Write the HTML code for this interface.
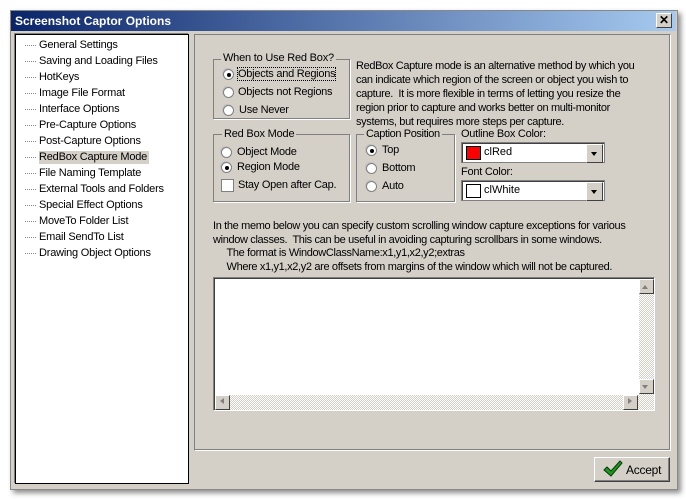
<!DOCTYPE html><html><head><style>
body{margin:0;width:686px;height:499px;background:#fff;position:relative;font-family:"Liberation Sans",sans-serif;font-size:11px;color:#000;overflow:hidden}
.a{position:absolute;white-space:nowrap}
.win{left:10px;top:10px;width:666px;height:478px;background:#d4d0c8;border:1px solid #888;box-shadow:3px 3px 5px rgba(0,0,0,.45)}
.title{left:11px;top:11px;width:665px;height:20px;background:linear-gradient(90deg,#0a246a,#a6caf0);color:#fff;font-weight:bold;font-size:12px;line-height:20px;padding-left:4px;box-sizing:border-box}
.x{left:656px;top:13px;width:14px;height:13px;background:#d4d0c8;border:1px solid;border-color:#fff #404040 #404040 #fff;font-size:12px;line-height:12px;text-align:center;color:#000;font-weight:bold}
.tree{left:15px;top:34px;width:172px;height:448px;background:#fff;border:1px solid #000;box-shadow:-1px -1px 0 #808080}
.ti{left:25px;height:14px;line-height:14px;letter-spacing:-0.2px}
.ti:before{content:"";display:inline-block;width:11px;border-top:1px dotted #888;vertical-align:middle;margin-right:3px}
.panel{left:194px;top:34px;width:475px;height:415px;border:1px solid;border-color:#808080 #fff #fff #808080;box-shadow:inset -1px -1px 0 #808080}
.grp{border:1px solid #808080;box-shadow:1px 1px 0 #fff}
.lg{background:#d4d0c8;padding:0 2px;letter-spacing:-0.2px}
.r{width:11px;height:11px;border-radius:50%;background:#fff;border:1px solid #808080;box-sizing:border-box;box-shadow:-1px -1px 0 #c0c0c0}
.r.on:after{content:"";position:absolute;left:3px;top:3px;width:4px;height:4px;border-radius:50%;background:#000}
.cb{width:13px;height:13px;background:#fff;border:1px solid #808080;box-sizing:border-box}
.combo{width:144px;height:21px;background:#fff;border:1px solid #808080;box-sizing:border-box;box-shadow:inset 1px 1px 0 #404040}
.btn{background:#d4d0c8;border:1px solid;border-color:#fff #404040 #404040 #fff}
.dd{right:1px;top:1px;width:15px;height:17px}
.dd:after{content:"";position:absolute;left:4px;top:7px;border:3.5px solid transparent;border-top:4px solid #000}
.t{letter-spacing:-0.25px}
</style></head><body>
<div class="a win"></div>
<div class="a title">Screenshot Captor Options</div>
<div class="a x">✕</div>
<div class="a tree"></div>
<div class="a ti" style="top:38px">General Settings</div>
<div class="a ti" style="top:54px">Saving and Loading Files</div>
<div class="a ti" style="top:70px">HotKeys</div>
<div class="a ti" style="top:86px">Image File Format</div>
<div class="a ti" style="top:102px">Interface Options</div>
<div class="a ti" style="top:118px">Pre-Capture Options</div>
<div class="a ti" style="top:134px">Post-Capture Options</div>
<div class="a ti" style="top:150px"><span style="background:#d4d0c8;padding:0 2px 1px 0">RedBox Capture Mode</span></div>
<div class="a ti" style="top:166px">File Naming Template</div>
<div class="a ti" style="top:182px">External Tools and Folders</div>
<div class="a ti" style="top:198px">Special Effect Options</div>
<div class="a ti" style="top:214px">MoveTo Folder List</div>
<div class="a ti" style="top:230px">Email SendTo List</div>
<div class="a ti" style="top:246px">Drawing Object Options</div>
<div class="a panel"></div>

<div class="a grp" style="left:213px;top:59px;width:135px;height:58px"></div>
<div class="a lg" style="left:221px;top:52px">When to Use Red Box?</div>
<div class="a r on" style="left:223px;top:69px"></div><div class="a t" style="left:238px;top:68px;outline:1px dotted #000">Objects and Regions</div>
<div class="a r" style="left:223px;top:87px"></div><div class="a t" style="left:238px;top:86px">Objects not Regions</div>
<div class="a r" style="left:223px;top:105px"></div><div class="a t" style="left:239px;top:104px">Use Never</div>

<div class="a t" style="left:356px;top:59px;line-height:14px;letter-spacing:-0.35px">RedBox Capture mode is an alternative method by which you<br>can indicate which region of the screen or object you wish to<br>capture.&nbsp; It is more flexible in terms of letting you resize the<br>region prior to capture and works better on multi-monitor<br>systems, but requires more steps per capture.</div>

<div class="a grp" style="left:213px;top:134px;width:135px;height:66px"></div>
<div class="a lg" style="left:222px;top:128px">Red Box Mode</div>
<div class="a r" style="left:221px;top:147px"></div><div class="a t" style="left:237px;top:146px">Object Mode</div>
<div class="a r on" style="left:221px;top:162px"></div><div class="a t" style="left:237px;top:161px">Region Mode</div>
<div class="a cb" style="left:221px;top:179px"></div><div class="a t" style="left:238px;top:179px">Stay Open after Cap.</div>

<div class="a grp" style="left:356px;top:134px;width:97px;height:66px"></div>
<div class="a lg" style="left:364px;top:128px;letter-spacing:-0.4px">Caption Position</div>
<div class="a r on" style="left:366px;top:145px"></div><div class="a t" style="left:382px;top:144px">Top</div>
<div class="a r" style="left:366px;top:163px"></div><div class="a t" style="left:382px;top:162px">Bottom</div>
<div class="a r" style="left:366px;top:181px"></div><div class="a t" style="left:382px;top:180px">Auto</div>

<div class="a t" style="left:461px;top:128px">Outline Box Color:</div>
<div class="a combo" style="left:461px;top:142px"><div class="a" style="left:4px;top:3px;width:13px;height:12px;background:#f00;border:1px solid #000"></div><div class="a" style="left:22px;top:3px">clRed</div><div class="a btn dd"></div></div>
<div class="a t" style="left:461px;top:166px">Font Color:</div>
<div class="a combo" style="left:461px;top:180px"><div class="a" style="left:4px;top:3px;width:13px;height:12px;background:#fff;border:1px solid #000"></div><div class="a" style="left:22px;top:3px">clWhite</div><div class="a btn dd"></div></div>

<div class="a" style="left:213px;top:220px;line-height:13.5px;letter-spacing:-0.35px">In the memo below you can specify custom scrolling window capture exceptions for various<br>window classes.&nbsp; This can be useful in avoiding capturing scrollbars in some windows.<br>&nbsp;&nbsp;&nbsp;&nbsp;&nbsp;The format is WindowClassName:x1,y1,x2,y2;extras<br>&nbsp;&nbsp;&nbsp;&nbsp;&nbsp;Where x1,y1,x2,y2 are offsets from margins of the window which will not be captured.</div>

<div class="a" style="left:213px;top:277px;width:442px;height:134px;background:#fff;border:1px solid;border-color:#808080 #fff #fff #808080;box-shadow:inset 1px 1px 0 #404040;box-sizing:border-box"></div>
<div class="a" style="left:639px;top:279px;width:15px;height:116px;background:repeating-conic-gradient(#d4d0c8 0 25%,#fff 0 50%) 0 0/2px 2px"></div>
<div class="a" style="left:215px;top:395px;width:439px;height:15px;background:repeating-conic-gradient(#d4d0c8 0 25%,#fff 0 50%) 0 0/2px 2px"></div>
<div class="a btn" style="left:639px;top:279px;width:13px;height:13px"></div>
<div class="a btn" style="left:639px;top:379px;width:13px;height:13px"></div>
<div class="a btn" style="left:215px;top:395px;width:13px;height:13px"></div>
<div class="a btn" style="left:623px;top:395px;width:13px;height:13px"></div>
<div class="a" style="left:642px;top:285px;border:3.5px solid transparent;border-bottom:4px solid #808080;border-top:0"></div>
<div class="a" style="left:642px;top:385px;border:3.5px solid transparent;border-top:4px solid #808080;border-bottom:0"></div>
<div class="a" style="left:220px;top:398px;border:3.5px solid transparent;border-right:4px solid #808080;border-left:0"></div>
<div class="a" style="left:628px;top:398px;border:3.5px solid transparent;border-left:4px solid #808080;border-right:0"></div>

<div class="a btn" style="left:594px;top:457px;width:74px;height:23px;box-shadow:inset -1px -1px 0 #808080"></div>
<svg class="a" style="left:603px;top:460px" width="20" height="18" viewBox="0 0 20 18"><path d="M1 10 L4 7 L8 11 L17 1 L19 3 L8 16 Z" fill="#1a9a1a" stroke="#0a3a0a" stroke-width="1"/></svg>
<div class="a t" style="left:626px;top:463px;font-size:12px">Accept</div>
</body></html>
